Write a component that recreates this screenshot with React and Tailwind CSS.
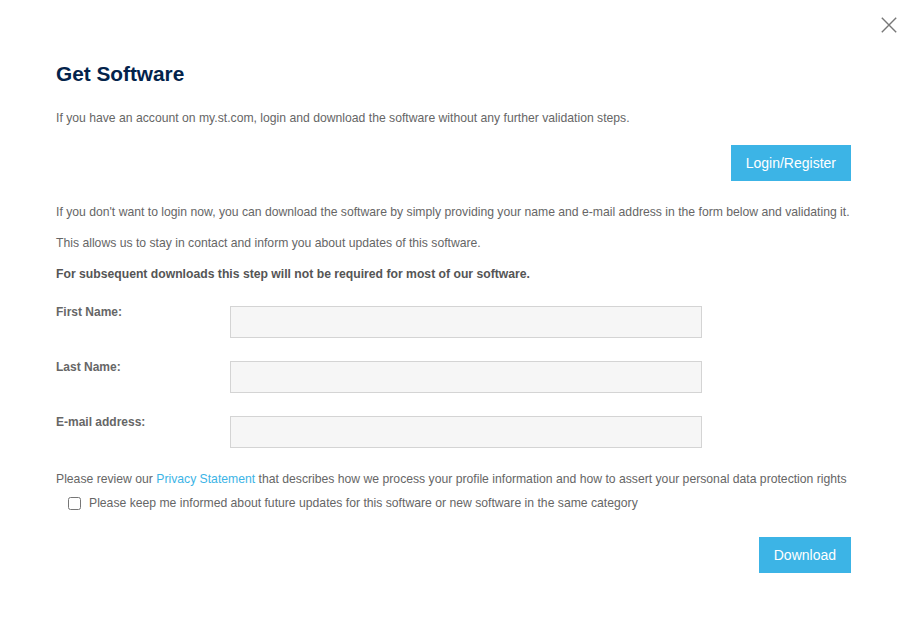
export default function App() {
  return (
    <div className="relative min-h-[619px] bg-white font-['Liberation_Sans',Arial,sans-serif] text-[#666]">
      {/* close */}
      <button className="absolute left-[881px] top-[17px] w-[16px] h-[16px] flex items-center justify-center">
        <svg width="16" height="16" viewBox="0 0 16 16" fill="none" stroke="#777" strokeWidth="1.4">
          <path d="M0.8 0.8 L15.2 15.2 M15.2 0.8 L0.8 15.2" />
        </svg>
      </button>

      <div className="pl-[56px] pr-[55px] pt-[62px]">
        <h2 className="text-[20.8px] leading-[24px] font-bold text-[#03234b]">Get Software</h2>
        <p className="mt-[23px] text-[12.2px] leading-[18px]">
          If you have an account on my.st.com, login and download the software without any further validation steps.
        </p>
        <div className="mt-[18px] flex justify-end">
          <button className="h-[36px] px-[15px] bg-[#3cb4e6] text-white text-[14px]">Login/Register</button>
        </div>
        <p className="mt-[22px] text-[12.2px] leading-[18px]">
          If you don't want to login now, you can download the software by simply providing your name and e-mail address in the form below and validating it.
        </p>
        <p className="mt-[13px] text-[12.2px] leading-[18px]">
          This allows us to stay in contact and inform you about updates of this software.
        </p>
        <p className="mt-[13px] text-[12.2px] leading-[18px] font-bold text-[#555]">
          For subsequent downloads this step will not be required for most of our software.
        </p>

        <div className="mt-[20px] flex flex-col gap-[20px]">
          {["First Name:", "Last Name:", "E-mail address:"].map((l) => (
            <div key={l} className="flex items-start">
              <label className="w-[174px] text-[12px] leading-[18px] font-bold text-[#666]">{l}</label>
              <input className="mt-[3px] w-[472px] h-[32px] bg-[#f6f6f6] border border-[#d4d4d4] outline-none" />
            </div>
          ))}
        </div>

        <p className="mt-[22px] text-[12.2px] leading-[18px]">
          Please review our <span className="text-[#3cb4e6]">Privacy Statement</span> that describes how we process your profile information and how to assert your personal data protection rights
        </p>
        <div className="mt-[6px] pl-[12px] flex items-center gap-[8px] text-[12.2px] leading-[18px]">
          <input type="checkbox" className="w-[13px] h-[13px] m-0" />
          <span>Please keep me informed about future updates for this software or new software in the same category</span>
        </div>

        <div className="mt-[25px] flex justify-end">
          <button className="h-[36px] px-[15px] bg-[#3cb4e6] text-white text-[14px]">Download</button>
        </div>
      </div>
    </div>
  );
}
